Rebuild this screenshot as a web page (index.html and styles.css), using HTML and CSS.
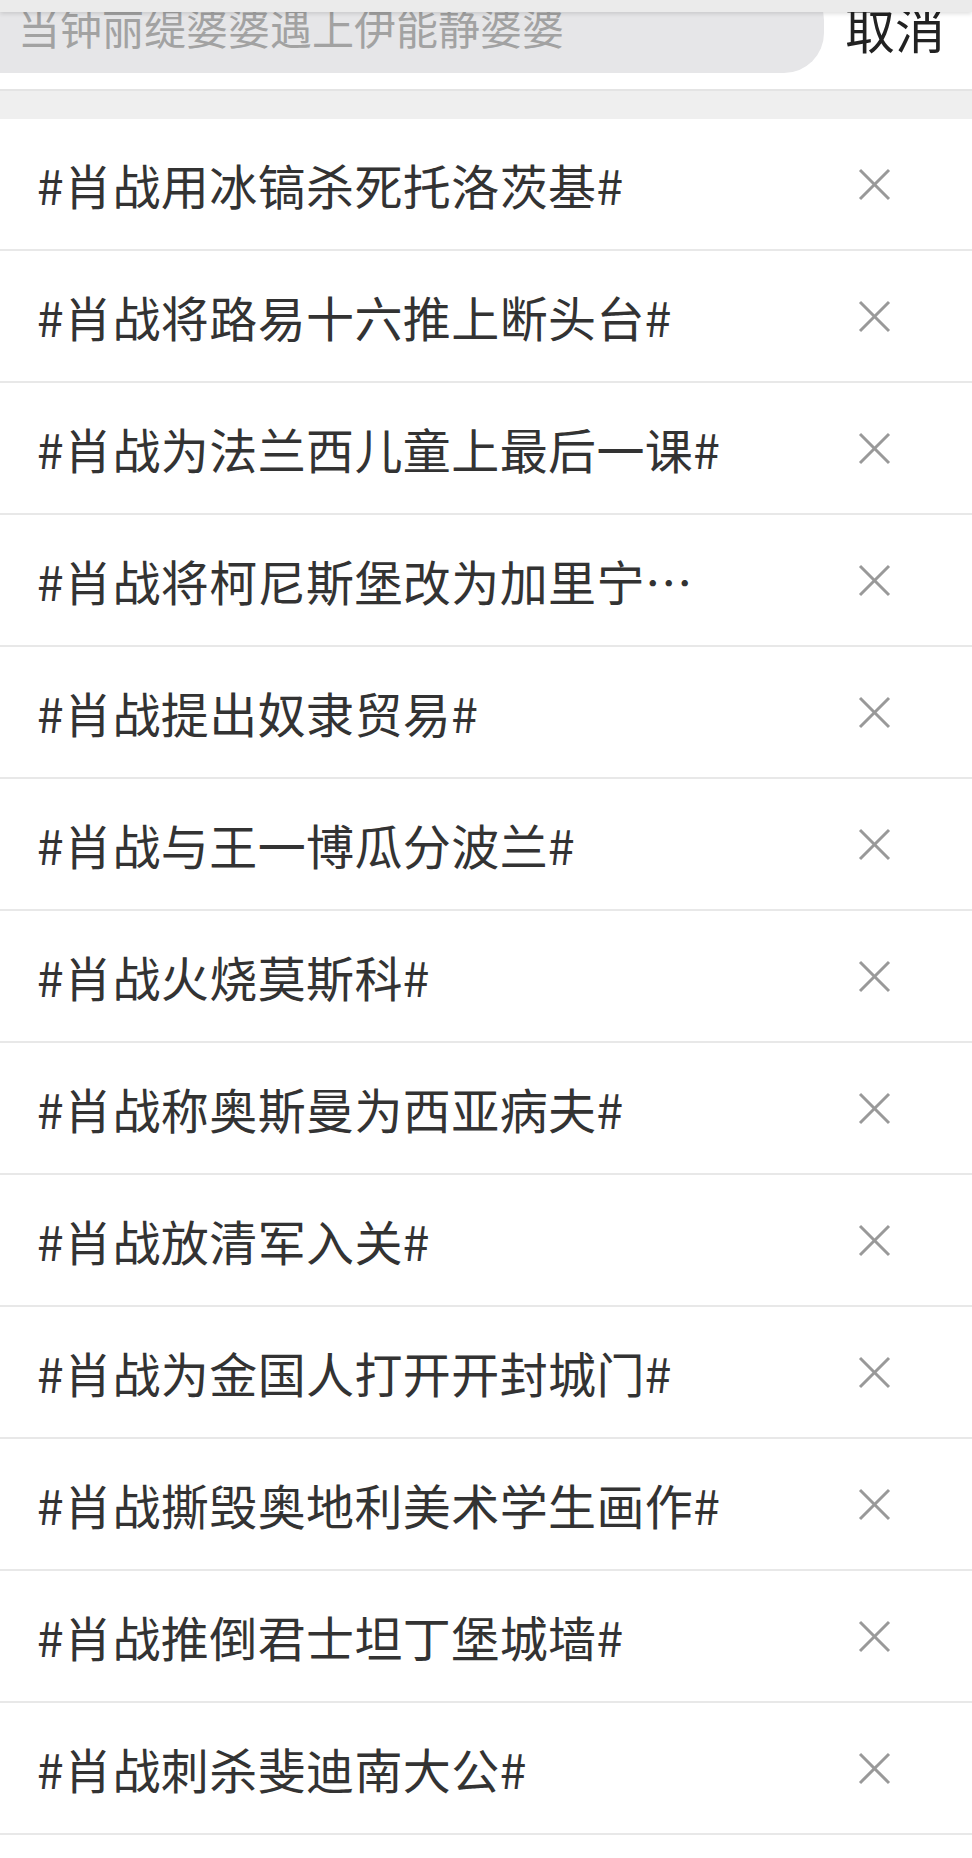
FILE: index.html
```html
<!DOCTYPE html>
<html lang="zh-CN">

<head>
    <meta charset="UTF-8">
    <meta name="viewport" content="width=device-width, initial-scale=1.0">
    <title>搜索历史</title>
    <link rel="stylesheet" href="styles.css">
</head>

<body>

    <div class="topbar">
        <div class="statusbar"></div>
        <div class="searchbox">当钟丽缇婆婆遇上伊能静婆婆</div>
        <div class="cancel">取消</div>
    </div>
    <div class="band"></div>

    <ul class="history">
        <li><span class="word">#肖战用冰镐杀死托洛茨基#</span><span class="close"></span></li>
        <li><span class="word">#肖战将路易十六推上断头台#</span><span class="close"></span></li>
        <li><span class="word">#肖战为法兰西儿童上最后一课#</span><span class="close"></span></li>
        <li><span class="word">#肖战将柯尼斯堡改为加里宁…</span><span class="close"></span></li>
        <li><span class="word">#肖战提出奴隶贸易#</span><span class="close"></span></li>
        <li><span class="word">#肖战与王一博瓜分波兰#</span><span class="close"></span></li>
        <li><span class="word">#肖战火烧莫斯科#</span><span class="close"></span></li>
        <li><span class="word">#肖战称奥斯曼为西亚病夫#</span><span class="close"></span></li>
        <li><span class="word">#肖战放清军入关#</span><span class="close"></span></li>
        <li><span class="word">#肖战为金国人打开开封城门#</span><span class="close"></span></li>
        <li><span class="word">#肖战撕毁奥地利美术学生画作#</span><span class="close"></span></li>
        <li><span class="word">#肖战推倒君士坦丁堡城墙#</span><span class="close"></span></li>
        <li><span class="word">#肖战刺杀斐迪南大公#</span><span class="close"></span></li>
    </ul>

</body>

</html>
```

FILE: styles.css
```css
body {
    margin: 0;
    background-color: #fff;
    font-family: "Noto Sans CJK SC", "Noto Sans", sans-serif;
    overflow: hidden;
}

.topbar {
    position: relative;
    display: flex;
    align-items: flex-start;
    height: 89px;
    border-bottom: 2px solid #e4e4e4;
    overflow: hidden;
}

/* the grey strip over the top edge */
.statusbar {
    position: absolute;
    top: 0;
    left: 0;
    right: 0;
    height: 12px;
    background-color: #ebebeb;
    box-shadow: 0 2px 4px rgba(0, 0, 0, 0.12);
}

.searchbox {
    flex: 1;
    margin-top: -20px;
    height: 93px;
    display: flex;
    align-items: center;
    padding-left: 18px;
    background-color: #e6e6e8;
    border-radius: 0 40px 40px 0;
    color: #a2a2a2;
    font-size: 42px;
    line-height: 1;
}

.cancel {
    width: 142px;
    padding-right: 6px;
    text-align: center;
    color: #222;
    font-size: 50px;
    line-height: 54px;
}

.band {
    height: 28px;
    background-color: #efefef;
}

.history {
    list-style: none;
    margin: 0;
    padding: 0;
}

.history li {
    display: flex;
    align-items: center;
    justify-content: space-between;
    height: 130px;
    border-bottom: 2px solid #e8e8e8;
    padding-left: 37px;
    padding-right: 82px;
}

.word {
    color: #333;
    font-size: 48px;
    letter-spacing: 0.4px;
    white-space: nowrap;
}

.close {
    position: relative;
    width: 32px;
    height: 32px;
}

.close::before,
.close::after {
    content: "";
    position: absolute;
    left: -4px;
    top: 15px;
    width: 41px;
    height: 3px;
    background-color: #999;
    transform: rotate(45deg);
}

.close::after {
    transform: rotate(-45deg);
}
```
